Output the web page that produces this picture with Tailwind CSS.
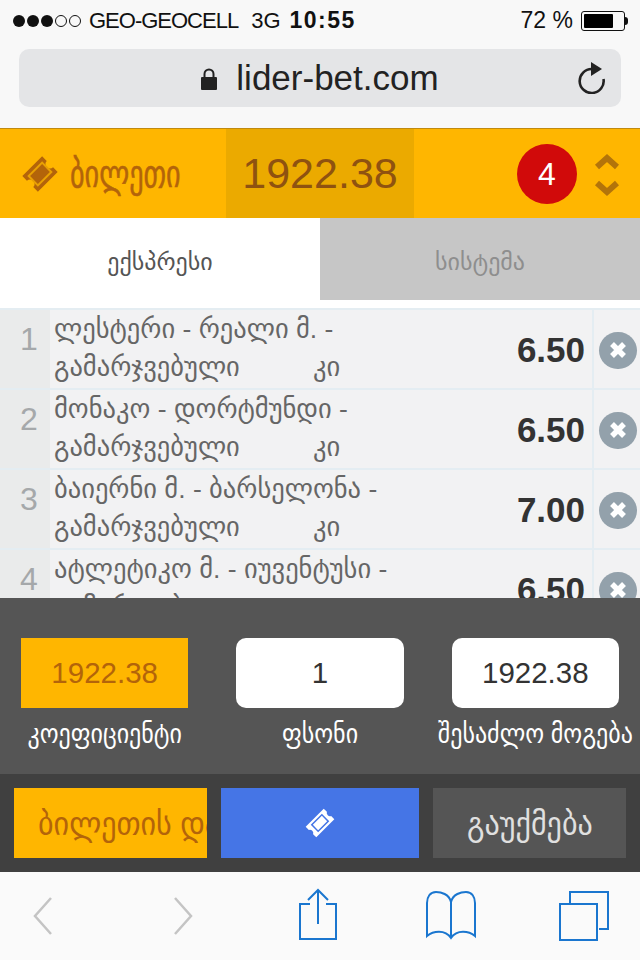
<!DOCTYPE html>
<html lang="ka">
<head>
    <meta charset="UTF-8">
    <meta name="viewport" content="width=device-width, initial-scale=1.0">
    <title>lider-bet.com</title>
    <script src="https://cdn.jsdelivr.net/npm/@tailwindcss/browser@4"></script>
</head>
<body class="font-['Liberation_Sans','DejaVu_Sans',sans-serif] bg-white">
<div class="w-[640px] h-[960px] flex flex-col overflow-hidden">

    <!-- status bar + address bar -->
    <div class="h-[128px] shrink-0 bg-[#f8f8f8] flex flex-col">
        <div class="h-[41px] flex items-center pl-[13px] pr-[12px] text-[22px] text-[#111] tracking-[-1px]">
            <div class="flex items-center gap-[2px] mr-[8px]">
                <span class="w-[12px] h-[12px] rounded-full bg-[#111]"></span>
                <span class="w-[12px] h-[12px] rounded-full bg-[#111]"></span>
                <span class="w-[12px] h-[12px] rounded-full bg-[#111]"></span>
                <span class="w-[12px] h-[12px] rounded-full border border-[#111]"></span>
                <span class="w-[12px] h-[12px] rounded-full border border-[#111]"></span>
            </div>
            <span class="mr-[13px]">GEO-GEOCELL</span>
            <span class="mr-[9px] tracking-normal">3G</span>
            <span class="font-bold text-[23px] tracking-[1.500px]">10:55</span>
            <span class="ml-auto mr-[8px] text-[23px] tracking-normal">72 %</span>
            <div class="w-[44px] h-[20px] border border-[#111] rounded-[3px] p-[2px] mr-[3px]">
                <div class="w-[29px] h-full bg-black rounded-[1px]"></div>
            </div>
            <div class="w-[3px] h-[8px] bg-[#111] -ml-[3px] rounded-r-full"></div>
        </div>
        <div class="mx-[19px] mt-[8px] h-[58px] rounded-[10px] bg-[#e4e5e7] flex items-center relative">
            <div class="mx-auto flex items-center gap-[19px] text-[35px] text-[#222]">
                <svg width="16" height="24" viewBox="0 0 16 24" class="mt-[2px]">
                    <path d="M3.500 11V7a4.500 4.500 0 0 1 9 0v4" fill="none" stroke="#222" stroke-width="2"/>
                    <rect x="0" y="10" width="16" height="13" rx="1" fill="#222"/>
                </svg>
                <span>lider-bet.com</span>
            </div>
            <svg width="28" height="32" viewBox="0 0 28 32" class="absolute right-[16px] top-[13px]">
                <path d="M15 7a12 12 0 1 0 11.500 10" fill="none" stroke="#222" stroke-width="2.600"/>
                <path d="M14 0l11 7l-11 7z" fill="#222"/>
            </svg>
        </div>
    </div>

    <!-- ticket header -->
    <div class="h-[90px] shrink-0 bg-[#ffb600] border-t border-[#c08a10] flex items-stretch">
        <div class="w-[226px] flex items-center pl-[20px] text-[#b3640a]">
            <svg width="40" height="40" viewBox="0 0 40 40" class="mr-[10px]">
                <g transform="rotate(-45 20 20)">
                    <path d="M6 9h28v6.500a4.500 4.500 0 0 0 0 9V31H6v-6.500a4.500 4.500 0 0 0 0-9z" fill="#b3640a"/>
                    <rect x="10.500" y="13.500" width="19" height="13" fill="none" stroke="#e9a103" stroke-width="2"/>
                </g>
            </svg>
            <span class="text-[30px] leading-none scale-x-[0.94] scale-y-[1.25] origin-left whitespace-nowrap [-webkit-text-stroke:0.4px_#b3640a]">ბილეთი</span>
        </div>
        <div class="w-[188px] bg-[#ebaa00] flex items-center justify-center text-[43px] text-[#8f5210]">1922.38</div>
        <div class="flex-1 flex items-center justify-end pr-[19px]">
            <div class="w-[60px] h-[60px] rounded-full bg-[#d10a0a] text-white text-[32px] flex items-center justify-center mr-[16px]">4</div>
            <div class="flex flex-col gap-[10px] pt-[2px]">
                <svg width="28" height="18" viewBox="0 0 28 18"><path d="M4 15L14 6l10 9" fill="none" stroke="#b3740a" stroke-width="6"/></svg>
                <svg width="28" height="18" viewBox="0 0 28 18"><path d="M4 3l10 9L24 3" fill="none" stroke="#b3740a" stroke-width="6"/></svg>
            </div>
        </div>
    </div>

    <!-- tabs -->
    <div class="h-[82px] shrink-0 flex text-[24px]">
        <div class="w-[320px] bg-white text-[#555] flex items-center justify-center pt-[6px]">ექსპრესი</div>
        <div class="w-[320px] bg-[#c6c6c6] text-[#8e8e8e] flex items-center justify-center pt-[6px]">სისტემა</div>
    </div>

    <!-- bets list -->
    <div class="flex-1 min-h-0 overflow-hidden bg-white pt-[8px]">
        <div class="flex h-[80px] bg-[#f2f2f3] border-t-2 border-[#e4edf2]">
            <div class="w-[50px] shrink-0 bg-[#eaebeb] flex items-center justify-center pl-[8px] pb-[20px] text-[32px] text-[#a5a8aa]">1</div>
            <div class="flex-1 pl-[4px] text-[#666] text-[26.500px] leading-[38px] whitespace-nowrap">
                <div>ლესტერი - რეალი მ. -</div>
                <div class="flex"><span class="w-[259px]">გამარჯვებული</span><span>კი</span></div>
            </div>
            <div class="w-[70px] shrink-0 flex items-center justify-end pr-[7px] pt-[2px] font-bold text-[35px] text-[#333]">6.50</div>
            <div class="w-[48px] shrink-0 border-l-2 border-[#e4edf2] flex items-center pl-[5px] pt-[2px]">
                <div class="w-[38px] h-[37px] rounded-full bg-[#93a1ab] flex items-center justify-center">
                    <svg width="20" height="20" viewBox="0 0 20 20"><path d="M4 4l12 12M16 4L4 16" stroke="#fff" stroke-width="5.500"/></svg>
                </div>
            </div>
        </div>
        <div class="flex h-[80px] bg-[#f2f2f3] border-t-2 border-[#e4edf2]">
            <div class="w-[50px] shrink-0 bg-[#eaebeb] flex items-center justify-center pl-[8px] pb-[20px] text-[32px] text-[#a5a8aa]">2</div>
            <div class="flex-1 pl-[4px] text-[#666] text-[26.500px] leading-[38px] whitespace-nowrap">
                <div>მონაკო - დორტმუნდი -</div>
                <div class="flex"><span class="w-[259px]">გამარჯვებული</span><span>კი</span></div>
            </div>
            <div class="w-[70px] shrink-0 flex items-center justify-end pr-[7px] pt-[2px] font-bold text-[35px] text-[#333]">6.50</div>
            <div class="w-[48px] shrink-0 border-l-2 border-[#e4edf2] flex items-center pl-[5px] pt-[2px]">
                <div class="w-[38px] h-[37px] rounded-full bg-[#93a1ab] flex items-center justify-center">
                    <svg width="20" height="20" viewBox="0 0 20 20"><path d="M4 4l12 12M16 4L4 16" stroke="#fff" stroke-width="5.500"/></svg>
                </div>
            </div>
        </div>
        <div class="flex h-[80px] bg-[#f2f2f3] border-t-2 border-[#e4edf2]">
            <div class="w-[50px] shrink-0 bg-[#eaebeb] flex items-center justify-center pl-[8px] pb-[20px] text-[32px] text-[#a5a8aa]">3</div>
            <div class="flex-1 pl-[4px] text-[#666] text-[26.500px] leading-[38px] whitespace-nowrap">
                <div>ბაიერნი მ. - ბარსელონა -</div>
                <div class="flex"><span class="w-[259px]">გამარჯვებული</span><span>კი</span></div>
            </div>
            <div class="w-[70px] shrink-0 flex items-center justify-end pr-[7px] pt-[2px] font-bold text-[35px] text-[#333]">7.00</div>
            <div class="w-[48px] shrink-0 border-l-2 border-[#e4edf2] flex items-center pl-[5px] pt-[2px]">
                <div class="w-[38px] h-[37px] rounded-full bg-[#93a1ab] flex items-center justify-center">
                    <svg width="20" height="20" viewBox="0 0 20 20"><path d="M4 4l12 12M16 4L4 16" stroke="#fff" stroke-width="5.500"/></svg>
                </div>
            </div>
        </div>
        <div class="flex h-[80px] bg-[#f2f2f3] border-t-2 border-[#e4edf2]">
            <div class="w-[50px] shrink-0 bg-[#eaebeb] flex items-center justify-center pl-[8px] pb-[20px] text-[32px] text-[#a5a8aa]">4</div>
            <div class="flex-1 pl-[4px] text-[#666] text-[26.500px] leading-[38px] whitespace-nowrap">
                <div>ატლეტიკო მ. - იუვენტუსი -</div>
                <div class="flex"><span class="w-[259px]">გამარჯვებული</span><span>კი</span></div>
            </div>
            <div class="w-[70px] shrink-0 flex items-center justify-end pr-[7px] pt-[2px] font-bold text-[35px] text-[#333]">6.50</div>
            <div class="w-[48px] shrink-0 border-l-2 border-[#e4edf2] flex items-center pl-[5px] pt-[2px]">
                <div class="w-[38px] h-[37px] rounded-full bg-[#93a1ab] flex items-center justify-center">
                    <svg width="20" height="20" viewBox="0 0 20 20"><path d="M4 4l12 12M16 4L4 16" stroke="#fff" stroke-width="5.500"/></svg>
                </div>
            </div>
        </div>
    </div>

    <!-- amounts -->
    <div class="h-[176px] shrink-0 bg-[#555] pt-[40px] grid grid-cols-[1fr_1fr_1fr] text-center">
        <div class="flex flex-col items-center pr-[4px]">
            <div class="w-[167px] h-[70px] bg-[#ffb600] text-[#b3640a] text-[29.500px] flex items-center justify-center">1922.38</div>
            <div class="mt-[8px] text-[24px] text-white scale-y-[1.15] whitespace-nowrap">კოეფიციენტი</div>
        </div>
        <div class="flex flex-col items-center">
            <div class="w-[168px] h-[70px] bg-white rounded-[10px] text-[#333] text-[29.500px] flex items-center justify-center">1</div>
            <div class="mt-[8px] text-[24px] text-white scale-y-[1.15] whitespace-nowrap">ფსონი</div>
        </div>
        <div class="flex flex-col items-center pl-[4px]">
            <div class="w-[167px] h-[70px] bg-white rounded-[10px] text-[#333] text-[29.500px] flex items-center justify-center">1922.38</div>
            <div class="mt-[8px] text-[24px] text-white scale-y-[1.15] whitespace-nowrap">შესაძლო მოგება</div>
        </div>
    </div>

    <!-- actions -->
    <div class="h-[98px] shrink-0 bg-[#404040] flex items-center pl-[14px] gap-[14px]">
        <div class="w-[193px] h-[70px] bg-[#ffb600] text-[#b3640a] text-[32px] overflow-hidden flex items-center pl-[24px] pt-[2px] whitespace-nowrap">
            <span class="scale-x-[0.94] origin-left">ბილეთის დადება</span>
        </div>
        <div class="w-[198px] h-[70px] bg-[#4575e6] flex items-center justify-center">
            <svg width="30" height="30" viewBox="0 0 40 40">
                <g transform="rotate(-45 20 20)">
                    <path d="M3 10h34v6a4.500 4.500 0 0 0 0 8v6H3v-6a4.500 4.500 0 0 0 0-8z" fill="#fff"/>
                    <rect x="10.500" y="14" width="19" height="12" fill="none" stroke="#4575e6" stroke-width="2"/>
                </g>
            </svg>
        </div>
        <div class="w-[193px] h-[70px] bg-[#555] text-[#e0e0e0] text-[32px] flex items-center justify-center pt-[2px] whitespace-nowrap">
            <span class="scale-x-[0.94]">გაუქმება</span>
        </div>
    </div>

    <!-- safari toolbar -->
    <div class="h-[88px] shrink-0 bg-[#fafafa] flex items-center">
        <div class="flex items-center w-full pl-[33px] pb-[4px]">
            <svg width="20" height="38" viewBox="0 0 20 38" class="mt-[4px]"><path d="M18 1L2 19l16 18" fill="none" stroke="#c4c4c4" stroke-width="2.500"/></svg>
            <svg width="20" height="38" viewBox="0 0 20 38" class="ml-[120px] mt-[4px]"><path d="M2 1l16 18L2 37" fill="none" stroke="#c4c4c4" stroke-width="2.500"/></svg>
            <svg width="40" height="52" viewBox="0 0 40 52" class="ml-[105px]">
                <path d="M12 16H2v35h36V16H28" fill="none" stroke="#1a76cf" stroke-width="2"/>
                <path d="M20 36V2M10 12l10-10 10 10" fill="none" stroke="#1a76cf" stroke-width="2"/>
            </svg>
            <svg width="52" height="50" viewBox="0 0 52 50" class="ml-[87px] mt-[1px]">
                <path d="M26 12C24 4 16 2 11 2C5 2 2 7 2 13v33c6-5 18-7 24 2c6-9 18-7 24-2V13c0-6-3-11-9-11c-5 0-13 2-15 10zM26 12v36" fill="none" stroke="#1a76cf" stroke-width="2"/>
            </svg>
            <svg width="50" height="50" viewBox="0 0 50 50" class="ml-[82px] mt-[3px]">
                <path d="M11 12V1h38v37H40" fill="none" stroke="#1a76cf" stroke-width="2"/>
                <rect x="1" y="13" width="37" height="36" fill="none" stroke="#1a76cf" stroke-width="2"/>
            </svg>
        </div>
    </div>

</div>
</body>
</html>
